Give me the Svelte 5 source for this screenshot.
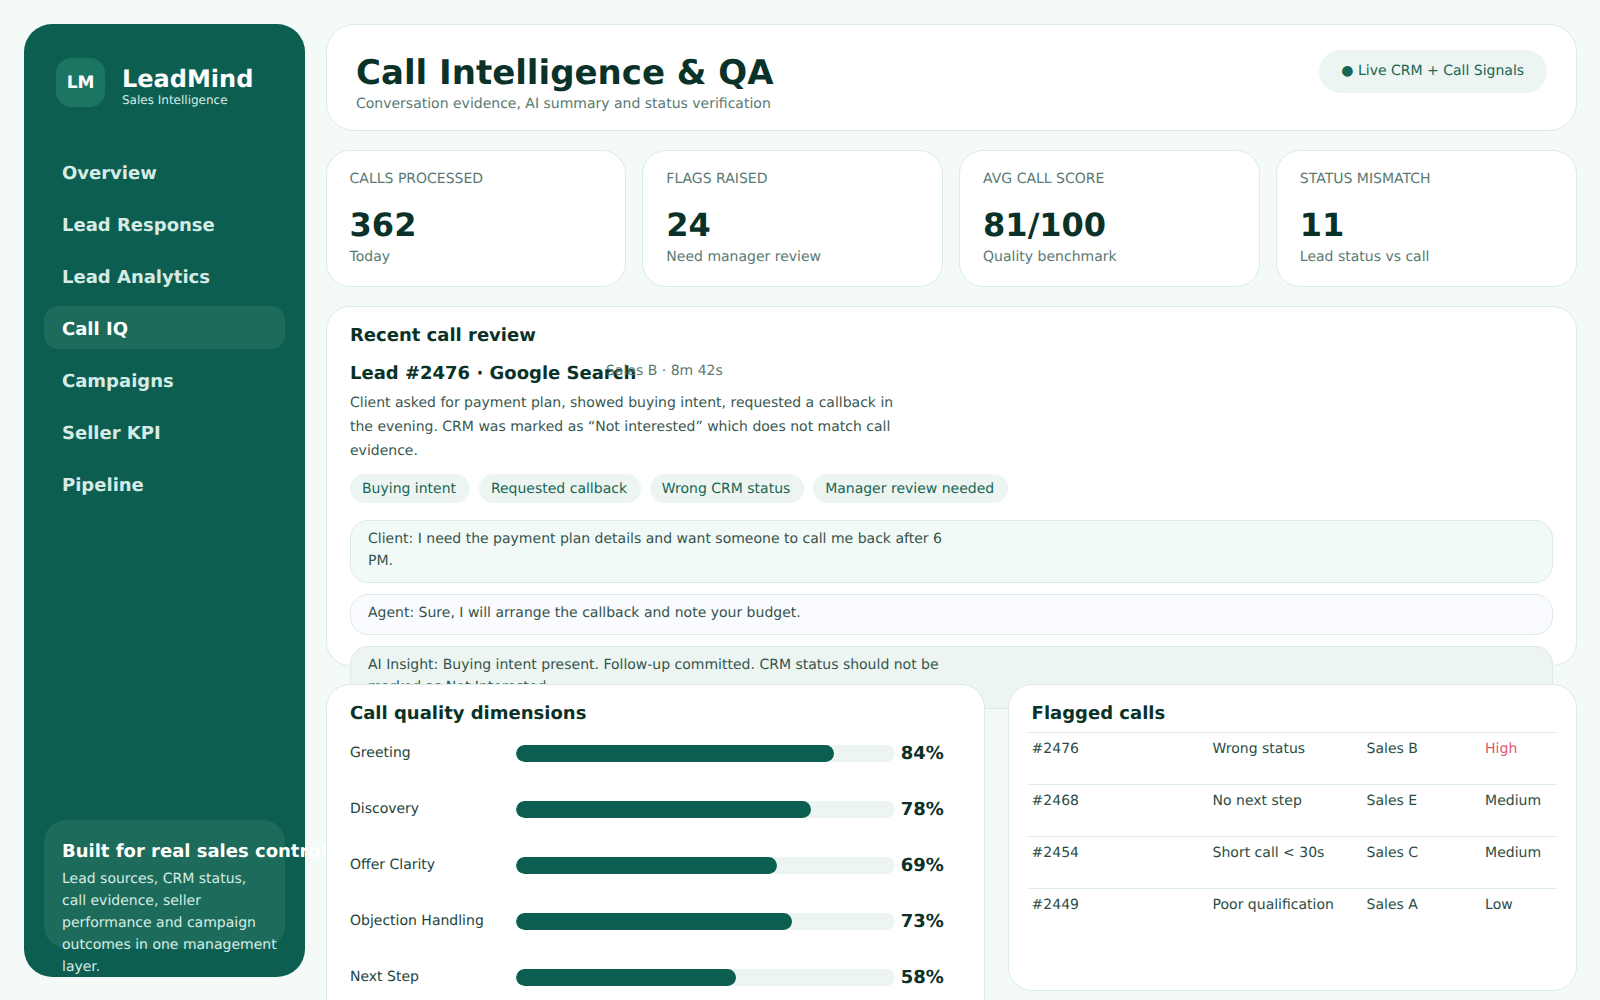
<script>
    const nav = ["Overview", "Lead Response", "Lead Analytics", "Call IQ", "Campaigns", "Seller KPI", "Pipeline"];
    const stats = [
        { label: "Calls processed", value: "362", sub: "Today" },
        { label: "Flags raised", value: "24", sub: "Need manager review" },
        { label: "Avg call score", value: "81/100", sub: "Quality benchmark" },
        { label: "Status mismatch", value: "11", sub: "Lead status vs call" }
    ];
    const chips = ["Buying intent", "Requested callback", "Wrong CRM status", "Manager review needed"];
    const dimensions = [
        { name: "Greeting", pct: 84 },
        { name: "Discovery", pct: 78 },
        { name: "Offer Clarity", pct: 69 },
        { name: "Objection Handling", pct: 73 },
        { name: "Next Step", pct: 58 }
    ];
    const flagged = [
        ["#2476", "Wrong status", "Sales B", "High"],
        ["#2468", "No next step", "Sales E", "Medium"],
        ["#2454", "Short call < 30s", "Sales C", "Medium"],
        ["#2449", "Poor qualification", "Sales A", "Low"]
    ];
</script>

<div class="app">
    <aside class="sidebar">
        <div class="brand">
            <div class="logo">LM</div>
            <div class="brand-text">
                <div class="brand-name">LeadMind</div>
                <div class="brand-sub">Sales Intelligence</div>
            </div>
        </div>
        <nav class="nav">
            {#each nav as item}
                <div class="nav-item" class:active={item === "Call IQ"}>{item}</div>
            {/each}
        </nav>
        <div class="promo">
            <h4>Built for real sales control</h4>
            <p>Lead sources, CRM status,<br>call evidence, seller<br>performance and campaign<br>outcomes in one management<br>layer.</p>
        </div>
    </aside>

    <main class="main">
        <header class="topbar card">
            <div>
                <h1>Call Intelligence &amp; QA</h1>
                <p>Conversation evidence, AI summary and status verification</p>
            </div>
            <div class="pill">● Live CRM + Call Signals</div>
        </header>

        <section class="stats">
            {#each stats as s}
                <div class="stat card">
                    <div class="stat-label">{s.label}</div>
                    <div class="stat-value">{s.value}</div>
                    <div class="stat-sub">{s.sub}</div>
                </div>
            {/each}
        </section>

        <section class="review card">
            <h3>Recent call review</h3>
            <div class="lead-head">
                <div class="lead-title">Lead #2476 · Google Search</div>
                <div class="lead-meta">Sales B · 8m 42s</div>
            </div>
            <p class="summary">Client asked for payment plan, showed buying intent, requested a callback in the evening. CRM was marked as “Not interested” which does not match call evidence.</p>
            <div class="chips">
                {#each chips as c}
                    <span class="chip">{c}</span>
                {/each}
            </div>
            <div class="bubble client"><span>Client: I need the payment plan details and want someone to call me back after 6 PM.</span></div>
            <div class="bubble agent"><span>Agent: Sure, I will arrange the callback and note your budget.</span></div>
            <div class="bubble insight"><span>AI Insight: Buying intent present. Follow-up committed. CRM status should not be marked as Not Interested.</span></div>
        </section>

        <section class="bottom">
            <div class="quality card">
                <h3>Call quality dimensions</h3>
                {#each dimensions as d}
                    <div class="dim">
                        <div class="dim-name">{d.name}</div>
                        <div class="track"><div class="fill" style="width: {d.pct}%"></div></div>
                        <div class="dim-pct">{d.pct}%</div>
                    </div>
                {/each}
            </div>
            <div class="flagged card">
                <h3>Flagged calls</h3>
                <table>
                    <tbody>
                        {#each flagged as row}
                            <tr>
                                {#each row as cell}
                                    <td class:high={cell === "High"}>{cell}</td>
                                {/each}
                            </tr>
                        {/each}
                    </tbody>
                </table>
            </div>
        </section>
    </main>
</div>

<style>
    :global(body) {
        margin: 0;
        background: #f4faf8;
        font-family: "DejaVu Sans", sans-serif;
        color: #0a3229;
        overflow: hidden;
        text-rendering: geometricPrecision;
    }
    .app {
        display: grid;
        grid-template-columns: 281px 1fr;
        gap: 20.6px;
        padding: 24px;
        height: 1000px;
        box-sizing: border-box;
    }
    .sidebar {
        height: 953px;
        box-sizing: border-box;
        background: #0c5e50;
        border-radius: 28px;
        padding: 34px 20px 29px;
        display: flex;
        flex-direction: column;
        color: #fff;
    }
    .brand {
        display: flex;
        align-items: flex-start;
        gap: 17px;
        padding: 0 12px;
    }
    .brand-text {
        padding-top: 8px;
    }
    .logo {
        width: 49px;
        height: 49px;
        border-radius: 15px;
        background: #1c7561;
        display: flex;
        align-items: center;
        justify-content: center;
        font-weight: 700;
        font-size: 17px;
    }
    .brand-name {
        font-size: 24px;
        font-weight: 700;
        line-height: 27px;
    }
    .brand-sub {
        font-size: 12px;
        line-height: 14px;
        color: #d6ebe5;
    }
    .nav {
        margin-top: 43px;
        display: flex;
        flex-direction: column;
        gap: 9px;
    }
    .nav-item {
        height: 43px;
        line-height: 47px;
        padding: 0 18px;
        border-radius: 14px;
        font-size: 18px;
        font-weight: 700;
        color: #d6ebe5;
    }
    .nav-item.active {
        background: #1c6b5b;
        color: #fff;
    }
    .promo {
        margin-top: auto;
        height: 128px;
        box-sizing: border-box;
        background: #1c6b5b;
        border-radius: 22px;
        padding: 20px 18px;
    }
    .promo h4 {
        margin: 0 0 4px;
        font-size: 18px;
        line-height: 24px;
        font-weight: 700;
        white-space: nowrap;
        color: #fff;
    }
    .promo p {
        margin: 0;
        white-space: nowrap;
        font-size: 14px;
        line-height: 22px;
        color: #d6ebe5;
    }
    .main {
        min-width: 0;
        margin-right: -0.6px;
        display: flex;
        flex-direction: column;
    }
    .card {
        background: #fff;
        border: 1px solid #dcebe7;
        box-sizing: border-box;
    }
    .topbar {
        height: 107px;
        flex: none;
        border-radius: 28px;
        padding: 26px 29px 0 29.4px;
        display: flex;
        align-items: flex-start;
        justify-content: space-between;
    }
    h1 {
        margin: 0;
        font-size: 34px;
        line-height: 44px;
        font-weight: 700;
    }
    .topbar p {
        margin: 0;
        font-size: 14px;
        line-height: 18px;
        color: #5a7a72;
    }
    .pill {
        margin-top: -1px;
        background: #edf5f2;
        color: #176655;
        border-radius: 999px;
        padding: 12px 22.5px 12px 22px;
        font-size: 14px;
        line-height: 19px;
    }
    .stats {
        margin-top: 19px;
        display: grid;
        grid-template-columns: repeat(4, 1fr);
        gap: 16px;
    }
    .stat {
        height: 137px;
        border-radius: 24px;
        padding: 19px 23px;
    }
    .stat-label {
        font-size: 14px;
        line-height: 18px;
        text-transform: uppercase;
        color: #5a7a72;
    }
    .stat-value {
        margin-top: 17px;
        font-size: 32px;
        line-height: 40px;
        font-weight: 700;
    }
    .stat-sub {
        margin-top: 2px;
        font-size: 14px;
        line-height: 20px;
        color: #5a7a72;
    }
    .review {
        margin-top: 19px;
        height: 360px;
        flex: none;
        border-radius: 24px;
        padding: 16.5px 22.6px 16.5px 23.4px;
    }
    h3 {
        margin: 0;
        font-size: 18px;
        line-height: 24px;
        font-weight: 700;
    }
    .lead-head {
        display: grid;
        grid-template-columns: 256px auto;
        justify-content: start;
        margin-top: 13px;
    }
    .lead-title {
        font-size: 18px;
        line-height: 26px;
        font-weight: 700;
        white-space: nowrap;
    }
    .lead-meta {
        font-size: 14px;
        line-height: 20px;
        color: #5a7a72;
    }
    .summary {
        margin: 4.5px 0 0;
        max-width: 545px;
        font-size: 14px;
        line-height: 24px;
        color: #3a5850;
    }
    .chips {
        display: flex;
        gap: 9px;
        margin-top: 11px;
    }
    .chip {
        height: 29px;
        background: #edf5f2;
        color: #176655;
        border-radius: 999px;
        padding: 0 13.8px 0 12px;
        font-size: 14px;
        line-height: 31px;
    }
    .bubble {
        margin-top: 11px;
        border: 1px solid #dcebe7;
        border-radius: 18px;
        padding: 7px 17px 10px;
        font-size: 14px;
        line-height: 22px;
        color: #35544c;
    }
    .bubble span {
        display: block;
        max-width: 590px;
    }
    .chips + .bubble {
        margin-top: 17px;
    }
    .client {
        background: #f2faf7;
    }
    .agent {
        background: #fafbff;
    }
    .insight {
        background: #edf5f2;
    }
    .bottom {
        display: grid;
        grid-template-columns: 659px 1fr;
        gap: 23px;
        align-items: start;
        margin-top: 18px;
        position: relative;
    }
    .quality {
        border-radius: 24px;
        padding: 17px 23.4px;
        height: 400px;
    }
    .quality h3 {
        margin-bottom: 17px;
    }
    .dim {
        display: grid;
        grid-template-columns: 160px 378.7px auto;
        column-gap: 6px;
        height: 56px;
        font-size: 14px;
        line-height: 20px;
    }
    .dim-name {
        color: #23443c;
    }
    .track {
        height: 17px;
        margin-top: 2px;
        background: #edf5f2;
        border-radius: 999px;
        overflow: hidden;
    }
    .fill {
        height: 100%;
        background: #0c5e50;
        border-radius: 999px;
    }
    .dim-pct {
        font-size: 18px;
        line-height: 22px;
        font-weight: 700;
    }
    .flagged {
        height: 307px;
        border-radius: 24px;
        padding: 17px 23px;
    }
    table {
        width: calc(100% + 8px);
        margin: 6px -4px 0;
        border-collapse: collapse;
        table-layout: fixed;
        font-size: 14px;
    }
    td {
        height: 52px;
        box-sizing: border-box;
        border-top: 1px solid #dcebe7;
        padding: 6px 4px;
        vertical-align: top;
        line-height: 20px;
        color: #2c4d45;
        white-space: nowrap;
    }
    td:nth-child(1) { width: 181px; }
    td:nth-child(2) { width: 154px; }
    td:nth-child(3) { width: 118.5px; }
    td.high {
        color: #e0566a;
    }
</style>
